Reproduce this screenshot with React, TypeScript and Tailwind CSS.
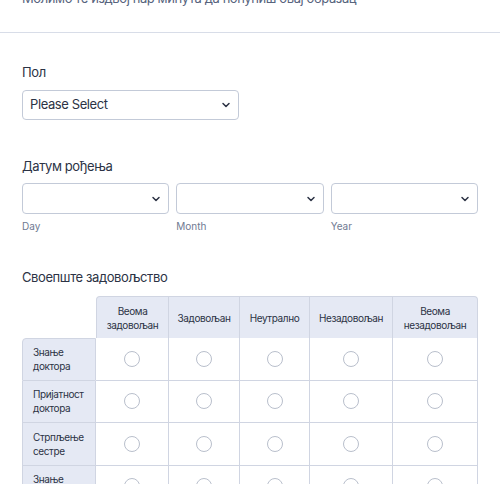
import React from "react";

const cols = ["Веома задовољан", "Задовољан", "Неутрално", "Незадовољан", "Веома незадовољан"];
const colW = ["w-[73px]", "w-[71px]", "w-[70px]", "w-[83px]", "w-[85px]"];
const rows = ["Знање доктора", "Пријатност доктора", "Стрпљење сестре", "Знање сестре"];

function Chevron() {
  return (
    <svg width="12" height="12" viewBox="0 0 12 12" fill="none" className="shrink-0">
      <path d="M3 4.5 6 7.5 9 4.5" stroke="#2c3345" strokeWidth="1.5" strokeLinecap="round" strokeLinejoin="round" />
    </svg>
  );
}

function Select({ text, className }: { text?: string; className: string }) {
  return (
    <div className={`flex items-center justify-between rounded-[4px] border border-[#c3cad8] bg-white pl-[7px] pr-[6px] ${className}`}>
      <span className="text-[13px] tracking-[-0.4px] text-[#2c3345]">{text}</span>
      <Chevron />
    </div>
  );
}

export default function App() {
  return (
    <div className="w-[500px] h-[484px] overflow-hidden bg-white [font-family:Inter,sans-serif] text-[#2c3345]">
      <div className="px-[22px] mt-[-12px] text-[13px] tracking-[-0.4px] leading-[20px] text-[#57647e]">
        Молимо те издвој пар минута да попуниш овај образац
      </div>
      <div className="mt-[24px] h-px bg-[#d8dde8]" />

      <div className="px-[22px]">
        <div className="mt-[29px] text-[13px] tracking-[-0.4px] leading-[20px]">Пол</div>
        <Select text="Please Select" className="mt-[8px] w-[217px] h-[30px]" />

        <div className="mt-[36px] text-[13px] tracking-[-0.4px] leading-[20px]">Датум рођења</div>
        <div className="mt-[7px] flex gap-[7px]">
          {["Day", "Month", "Year"].map((s) => (
            <div key={s} className="flex-1">
              <Select className="h-[31px]" />
              <div className="mt-[4px] text-[10px] leading-[16px] text-[#6f7a92]">{s}</div>
            </div>
          ))}
        </div>

        <div className="mt-[33px] text-[13px] tracking-[-0.4px] leading-[20px]">Своепште задовољство</div>
        <table className="mt-[9px] border-separate border-spacing-0 table-fixed text-[10px] tracking-[-0.4px] leading-[14px]">
          <thead>
            <tr>
              <th className="w-[74px] h-[42px]" />
              {cols.map((c, i) => (
                <th
                  key={c}
                  className={`${colW[i]} h-[42px] px-[4px] font-normal text-center bg-[#e5e9f4] border-t border-r border-[#d0d5e2] ${i === 0 ? "border-l rounded-tl-[4px]" : ""} ${i === 4 ? "rounded-tr-[4px]" : ""}`}
                >
                  {c}
                </th>
              ))}
            </tr>
          </thead>
          <tbody>
            {rows.map((r, ri) => (
              <tr key={r}>
                <td
                  className={`h-[42.5px] pl-[10px] pr-[4px] text-left bg-[#e5e9f4] border-l border-b border-r border-[#d0d5e2] ${ri === 0 ? "border-t rounded-tl-[4px]" : ""}`}
                >
                  {r}
                </td>
                {cols.map((c) => (
                  <td key={c} className="border-b border-r border-[#d0d5e2] text-center">
                    <span className="inline-block w-[16px] h-[16px] rounded-full border border-[#b9bfcc] bg-white align-middle" />
                  </td>
                ))}
              </tr>
            ))}
          </tbody>
        </table>
      </div>
    </div>
  );
}
